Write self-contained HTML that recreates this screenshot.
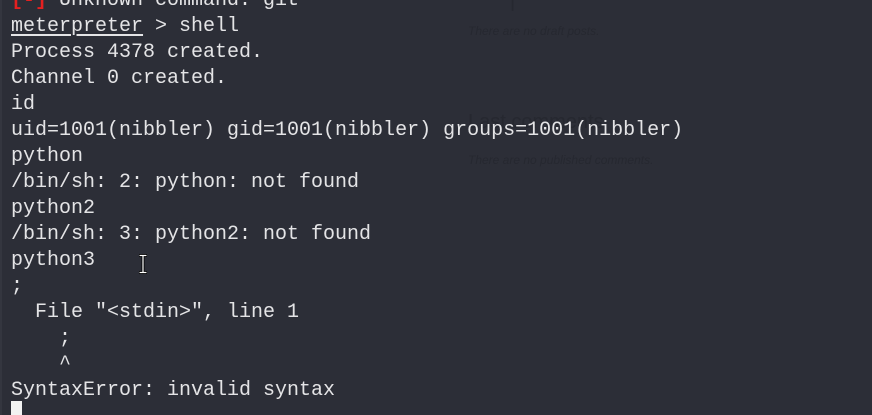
<!DOCTYPE html>
<html><head><meta charset="utf-8"><style>
html,body{margin:0;padding:0}
body{width:872px;height:415px;overflow:hidden;background:#2c2e37;position:relative;font-family:"Liberation Mono",monospace}
.edge{position:absolute;left:0;top:0;width:2px;height:415px;background:#34363f}
.term{position:absolute;left:11px;top:-12px;font-size:20px;line-height:26px;color:#e4e4e6;white-space:pre;letter-spacing:0}
.red{color:#e52020;font-weight:bold}
.u{text-decoration:underline;text-underline-offset:3px}
.faint{position:absolute;font-family:"Liberation Sans",sans-serif;color:#262830;white-space:nowrap}
.cur{position:absolute;left:11px;top:401px;width:11px;height:14px;background:#f2f2f2}
</style></head><body>
<div class="edge"></div>
<div class="faint" style="left:468px;top:24px;font-size:12px;font-style:italic">There are no draft posts.</div>
<div class="faint" style="left:468px;top:111px;font-size:20px">Last comments</div>
<div class="faint" style="left:468px;top:153px;font-size:12px;font-style:italic">There are no published comments.</div>
<div class="faint" style="left:510px;top:-10px;font-size:20px">|</div>
<div class="term"><span class="red">[-]</span> Unknown command: git
<span class="u">meterpreter</span> &gt; shell
Process 4378 created.
Channel 0 created.
id
uid=1001(nibbler) gid=1001(nibbler) groups=1001(nibbler)
python
/bin/sh: 2: python: not found
python2
/bin/sh: 3: python2: not found
python3
;
  File "&lt;stdin&gt;", line 1
    ;
    ^
SyntaxError: invalid syntax</div>
<div class="cur"></div>
<svg style="position:absolute;left:137px;top:254px" width="12" height="20" viewBox="0 0 12 20">
<path d="M2 1.5h8M2 18.5h8M6 1.5v17" stroke="#000" stroke-width="3" fill="none"/>
<path d="M2.5 1.5h7M2.5 18.5h7M6 1.5v17" stroke="#fff" stroke-width="1.2" fill="none"/>
</svg>
</body></html>
